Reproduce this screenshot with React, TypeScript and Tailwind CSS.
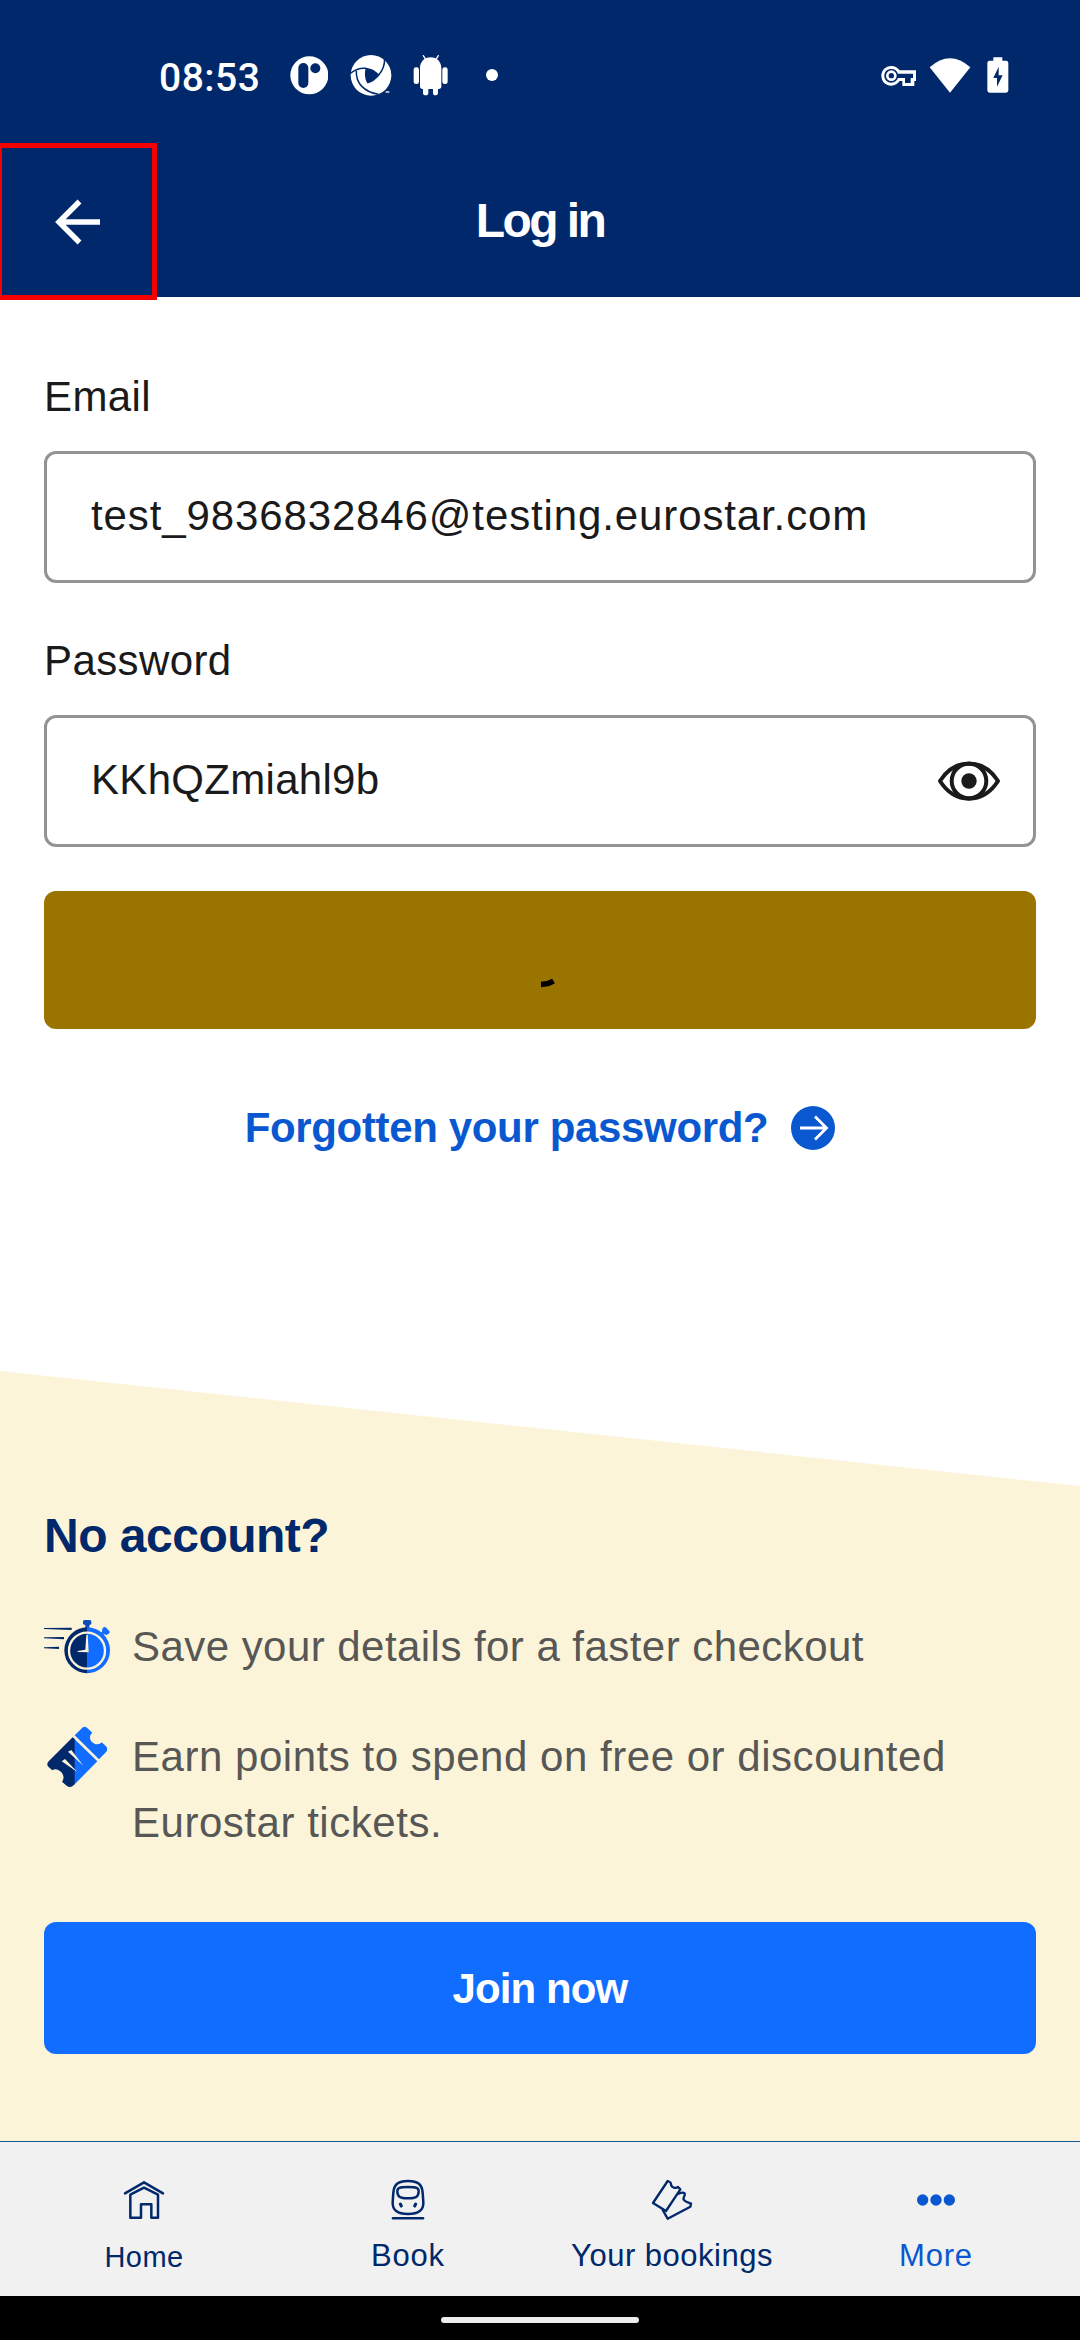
import React from "react";

function StatusBar() {
  return (
    <div className="flex h-[143px] items-start pt-[51px] text-white">
      <div className="ml-[159px] mt-[2px] h-[48px] w-[101px] whitespace-nowrap font-['Roboto'] text-[39px] font-medium leading-[50px] tracking-[0.5px]">
        08:53
      </div>
      <svg className="ml-[30px] h-[48px] w-[38px]" viewBox="450 33 114 144">
        <circle cx="508" cy="106" r="57" fill="#fff" />
        <rect x="475" y="69" width="30" height="75" rx="15" fill="#00286a" />
        <circle cx="526" cy="85" r="15" fill="#00286a" />
      </svg>
      <svg className="ml-[22px] h-[48px] w-[42px]" viewBox="629 33 126 144">
        <circle cx="692" cy="106" r="61" fill="#fff" />
        <path d="M676 84 C690 84 706 92 716 104 C706 116 692 126 680 129 C673 116 672 98 676 84Z" fill="#00286a" />
        <g fill="none" stroke="#00286a" strokeWidth="4.500">
          <path d="M630 100 C645 88 660 83 678 85" />
          <path d="M733 56 C733 78 727 92 714 106" />
          <path d="M648 92 C646 130 672 156 714 163" />
          <path d="M681 128 C692 126 704 118 716 104" />
        </g>
        <rect x="736" y="153" width="11" height="6" fill="#a9b8d4" />
      </svg>
      <svg className="ml-[21px] h-[48px] w-[36px]" viewBox="822 33 108 144" fill="#fff">
        <path d="M843 84 C843 66 856 52 875 52 C894 52 907 66 907 84 V139 Q907 147 899 147 H897 V158 Q897 166 889 166 Q882 166 882 158 V147 H868 V158 Q868 166 860 166 Q852 166 852 158 V147 H851 Q843 147 843 139Z" />
        <rect x="824" y="82" width="16" height="50" rx="7" />
        <rect x="910" y="82" width="16" height="50" rx="7" />
        <path d="M853 47 L860 58 M898 47 L891 58" stroke="#fff" strokeWidth="4" strokeLinecap="round" />
      </svg>
      <div className="ml-[37px] mt-[18px] h-[12px] w-[12px] rounded-full bg-white" />
      <svg className="ml-[383px] h-[48px] w-[36px]" viewBox="63 33 108 144">
        <path
          fillRule="evenodd"
          fill="#fff"
          d="M94 78 C105 78 114 84 119 91 H168 V123 H163 V138 H127 V123 H119 C114 131 105 137 94 137 C77 137 64 124 64 107 C64 91 77 78 94 78Z M94 87 C82 87 73 95 73 107 C73 119 82 128 94 128 C104 128 111 122 114 114 H135 V129 H152 V114 H159 V101 H114 C111 93 104 87 94 87Z"
        />
        <circle cx="94" cy="107" r="12" fill="none" stroke="#fff" strokeWidth="8" />
      </svg>
      <svg className="ml-[12px] h-[48px] w-[42px]" viewBox="205 33 126 144">
        <path d="M207 82 Q268 28 329 82 L268 158Z" fill="#fff" />
      </svg>
      <svg className="ml-[16px] h-[48px] w-[22px]" viewBox="380 33 66 144">
        <path d="M399 52 H426 V62 H437 Q444 62 444 69 V151 Q444 158 437 158 H388 Q381 158 381 151 V69 Q381 62 388 62 H399Z" fill="#fff" />
        <path d="M415 80 L399 114 H410 V140 L427 106 H415Z" fill="#00286a" />
      </svg>
    </div>
  );
}

function Header() {
  return (
    <header className="h-[297px] bg-[#00286a]">
      <StatusBar />
      <div className="grid h-[154px] grid-cols-[157px_1fr_157px]">
        <button className="-ml-[3px] flex h-[157px] w-[160px] items-center justify-center border-[5px] border-[#f50000]">
          <svg className="ml-[1px] mt-[1px] h-[48px] w-[48px]" viewBox="0 0 48 48" fill="none" stroke="#fff" strokeWidth="5.500">
            <path d="M46 24 H6 M25.500 3.500 L5 24 L25.500 44.500" />
          </svg>
        </button>
        <h1 className="mt-[50px] text-center text-[48px] font-bold leading-[56px] tracking-[-2.6px] text-white">Log in</h1>
      </div>
    </header>
  );
}

function Field({ label, value, labelClass, valueClass, children }: {
  label: string;
  value: string;
  labelClass: string;
  valueClass: string;
  children?: React.ReactNode;
}) {
  return (
    <div>
      <div className={`h-[60px] text-[42px] leading-[60px] ${labelClass}`}>{label}</div>
      <div className="flex h-[132px] items-center justify-between rounded-[12px] border-[3px] border-[#939393] pl-[44px] pr-[31px]">
        <span className={`whitespace-nowrap pb-[3px] text-[42px] leading-[60px] ${valueClass}`}>{value}</span>
        {children}
      </div>
    </div>
  );
}

function EyeIcon() {
  return (
    <svg className="h-[44px] w-[66px]" viewBox="-33 -22 66 44" fill="none" stroke="#1a1a1a" strokeWidth="4">
      <path d="M-29 0 C-14 -23.500 14 -23.500 29 0 C14 23.500 -14 23.500 -29 0Z" strokeLinejoin="round" />
      <circle r="17.300" />
      <circle r="7.700" fill="#1a1a1a" stroke="none" />
    </svg>
  );
}

function StopwatchIcon() {
  return (
    <svg className="h-[66px] w-[66px] shrink-0" viewBox="42 72 198 198">
      <path d="M42 114 L125 113 V120 L42 117Z M42 142 L102 141 V148 L42 145Z M42 172 L87 170 V177 L42 175Z" fill="#00286a" />
      <path d="M159 94 Q160 90 165 90 H177 Q183 90 184 94 V102 L178 106 V114 H166 V106 L159 102Z" fill="#0c4db8" />
      <path d="M217 116 Q221 109 227 112 L237 122 Q242 127 236 131 L230 135 L221 132 L216 138 L209 131 L216 125Z" fill="#116dff" />
      <path d="M172 112 A69 69 0 0 0 172 250Z" fill="#00286a" />
      <path d="M171 112 A69 69 0 0 1 171 250Z" fill="#116dff" />
      <circle cx="171" cy="182" r="54" fill="none" stroke="#fcf4d8" strokeWidth="7" />
      <path d="M169 134 H173 L176 187 L143 186 V183 L166 179Z" fill="#fcf4d8" />
    </svg>
  );
}

function TicketIcon() {
  return (
    <svg className="h-[66px] w-[66px] shrink-0" viewBox="42 402 198 198">
      <path d="M128 442 L56 514 Q48 523 55 530 L67 541 C76 533 89 540 96 549 C103 559 101 569 96 575 L110 587 Q119 595 128 588 L135 582 V448Z" fill="#00286a" />
      <path d="M134 448 L202 514 L134 583Z" fill="#116dff" />
      <path d="M134 436 L154 416 Q162 407 171 413 L187 428 C178 436 178 446 185 455 C194 463 206 467 215 457 L228 469 Q235 477 229 485 L207 508Z" fill="#116dff" />
      <path d="M95 514 L105 507 L142 546Z M114 485 L124 480 L160 527Z" fill="#fcf4d8" />
    </svg>
  );
}

function HomeIcon() {
  return (
    <svg className="h-[44px] w-[44px]" viewBox="126 144 132 132" fill="none" stroke="#00286a" strokeWidth="7.500" strokeLinecap="round" strokeLinejoin="round">
      <path d="M135 190 L192 157 L249 190" />
      <path d="M151 194 V263 H183 V223 H214 V263 H234 V194 L192 173Z" />
    </svg>
  );
}

function TrainIcon() {
  return (
    <svg className="h-[44px] w-[44px]" viewBox="918 144 132 132" fill="none" stroke="#00286a" strokeWidth="7.500" strokeLinecap="round">
      <path d="M984 153 C1015 153 1026 164 1028 188 L1030 217 C1031 240 1016 252 984 252 C952 252 937 240 938 217 L940 188 C942 164 953 153 984 153Z" />
      <path d="M984 171 C1010 171 1016 174 1016 184 C1016 199 1010 205 984 205 C958 205 952 199 952 184 C952 174 958 171 984 171Z" />
      <path d="M961 222 L964 228 M1007 222 L1004 228" strokeWidth="9" />
      <path d="M939 265 H1029" />
    </svg>
  );
}

function TicketsIcon() {
  return (
    <svg className="h-[44px] w-[44px]" viewBox="270 144 132 132" fill="none" stroke="#00286a" strokeWidth="7" strokeLinecap="round" strokeLinejoin="round">
      <path d="M323 153 L279 219 L318 243 L361 178 L354 171 C346 177 333 172 333 162 C334 158 330 156 323 153Z" />
      <path d="M308 240 L323 266 L391 230 L393 221 C386 218 378 217 372 210 C366 204 377 198 374 190 Q369 185 356 191" />
    </svg>
  );
}

function MoreIcon() {
  return (
    <svg className="h-[44px] w-[44px]" viewBox="1062 144 132 132" fill="#0a58d0">
      <circle cx="1088" cy="210" r="17" />
      <circle cx="1128" cy="210" r="17" />
      <circle cx="1168" cy="210" r="17" />
    </svg>
  );
}

function NavItem({ label, labelClass, children }: { label: string; labelClass: string; children: React.ReactNode }) {
  return (
    <div className="flex flex-col items-center pt-[36px]">
      {children}
      <span className={`whitespace-nowrap leading-[44px] ${labelClass}`}>{label}</span>
    </div>
  );
}

export default function App() {
  return (
    <div className="flex h-[2340px] w-[1080px] flex-col overflow-hidden bg-white font-['Liberation_Sans',sans-serif] text-[#1a1a1a]">
      <Header />
      <main className="h-[1074px] px-[44px] pt-[70px]">
        <div className="flex flex-col gap-[48px]">
          <Field label="Email" value="test_9836832846@testing.eurostar.com" labelClass="mb-[24px] tracking-[0.4px]" valueClass="tracking-[0.88px]" />
          <Field label="Password" value="KKhQZmiahl9b" labelClass="mb-[24px] tracking-[0.4px]" valueClass="tracking-[0.3px]">
            <EyeIcon />
          </Field>
        </div>
        <button className="mt-[44px] flex h-[138px] w-full items-center justify-center rounded-[12px] bg-[#997500]">
          <svg className="h-[66px] w-[66px]" viewBox="0 0 66 66">
            <path d="M34 57.500 A25 25 0 0 0 46.500 54" fill="none" stroke="#000" strokeWidth="5.500" />
          </svg>
        </button>
        <a className="mt-[69px] flex h-[60px] items-center justify-center gap-[23px] text-[42px] font-bold leading-[60px] text-[#0a58d0]">
          <span className="whitespace-nowrap tracking-[-0.35px]">Forgotten your password?</span>
          <svg className="h-[44px] w-[44px]" viewBox="0 0 44 44">
            <circle cx="22" cy="22" r="22" fill="#0a58d0" />
            <path d="M9 22 H35 M24 10.500 L35.500 22 L24 33.500" fill="none" stroke="#fff" strokeWidth="2.800" />
          </svg>
        </a>
      </main>
      <section className="h-[770px] bg-[#fcf4d8] px-[44px] pt-[135px] [clip-path:polygon(0_0,100%_115px,100%_100%,0_100%)]">
        <h2 className="text-[48px] font-bold leading-[60px] tracking-[-0.5px] text-[#00286a]">No account?</h2>
        <div className="mt-[48px] flex flex-col gap-[44px] text-[42px] leading-[66px] text-[#575756]">
          <div className="flex gap-[22px]">
            <StopwatchIcon />
            <p className="whitespace-nowrap tracking-[0.45px]">Save your details for a faster checkout</p>
          </div>
          <div className="flex gap-[22px]">
            <TicketIcon />
            <p className="whitespace-nowrap tracking-[0.53px]">
              Earn points to spend on free or discounted
              <br />
              Eurostar tickets.
            </p>
          </div>
        </div>
        <button className="mt-[66px] flex h-[132px] w-full items-center justify-center rounded-[12px] bg-[#116dff] text-[42px] font-bold tracking-[-0.9px] text-white">
          Join now
        </button>
      </section>
      <nav className="grid h-[155px] grid-cols-4 border-t border-[#1c5a96] bg-[#f1f1f1] px-[12px] text-[#00286a]">
        <NavItem label="Home" labelClass="mt-[13px] text-[29px] tracking-[0.4px]"><HomeIcon /></NavItem>
        <NavItem label="Book" labelClass="mt-[12px] text-[31px] tracking-[0.8px]"><TrainIcon /></NavItem>
        <NavItem label="Your bookings" labelClass="mt-[12px] text-[31px] tracking-[0.5px]"><TicketsIcon /></NavItem>
        <NavItem label="More" labelClass="mt-[12px] text-[31px] tracking-[0.8px] text-[#0a58d0]"><MoreIcon /></NavItem>
      </nav>
      <footer className="flex h-[44px] items-center justify-center bg-black pt-[4px]">
        <div className="h-[6px] w-[198px] rounded-full bg-[#ececec]" />
      </footer>
    </div>
  );
}
